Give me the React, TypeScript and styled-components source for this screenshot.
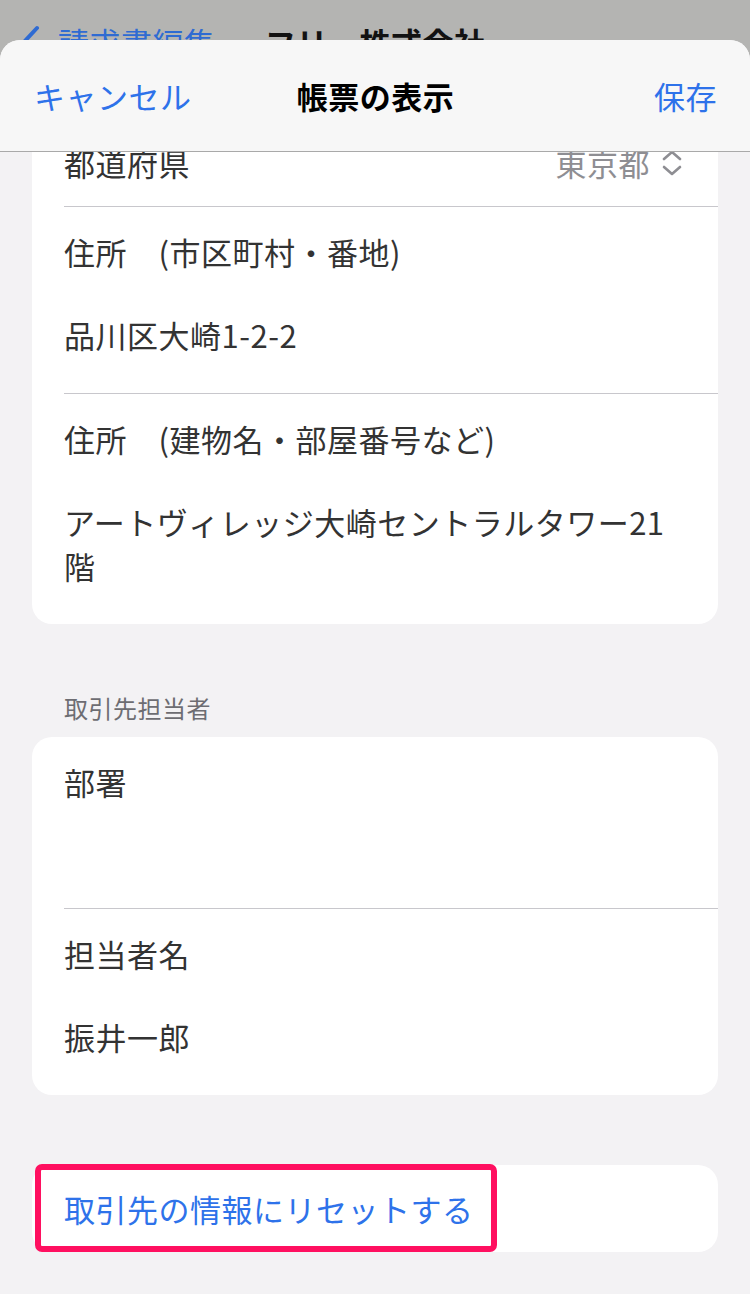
import React from "react";
import styled, { createGlobalStyle } from "styled-components";

const GlobalStyle = createGlobalStyle`
  html, body {
    margin: 0;
    padding: 0;
    background: #b4b4b2;
  }
  body {
    font-family: "Noto Sans CJK JP", "Noto Sans", sans-serif;
    letter-spacing: 0.5px;
    -webkit-font-smoothing: antialiased;
  }
`;

const Screen = styled.div`
  width: 750px;
  height: 1294px;
  display: flex;
  flex-direction: column;
  overflow: hidden;
  background: #b4b4b2;
`;

const BehindBar = styled.div`
  height: 40px;
  overflow: hidden;
  display: flex;
  align-items: flex-start;
  padding: 20px 0 0 20px;
  box-sizing: border-box;
`;

const BehindBack = styled.div`
  display: flex;
  align-items: center;
  gap: 18px;
  width: 245px;
  color: #2f6bd2;
  font-size: 31px;
  line-height: 44px;
`;

const BehindTitle = styled.div`
  color: #121212;
  font-size: 31px;
  font-weight: 700;
  line-height: 44px;
`;

const Sheet = styled.div`
  flex: 1;
  display: flex;
  flex-direction: column;
  background: #f3f2f4;
  border-radius: 20px 20px 0 0;
  overflow: hidden;
`;

const SheetHeader = styled.div`
  height: 112px;
  flex-shrink: 0;
  display: grid;
  grid-template-columns: 1fr auto 1fr;
  align-items: center;
  padding: 0 33px 0 34px;
  background: #f7f7f7;
  border-bottom: 1px solid #a9a9a9;
  box-sizing: border-box;
  position: relative;
  z-index: 1;
`;

const NavButton = styled.span<{ $align: "left" | "right" }>`
  color: #2e72ea;
  font-size: 31px;
  line-height: 44px;
  justify-self: ${(p) => (p.$align === "left" ? "start" : "end")};
`;

const NavTitle = styled.span`
  color: #000;
  font-size: 31px;
  font-weight: 700;
  line-height: 44px;
`;

const Content = styled.div`
  flex: 1;
  overflow: hidden;
  padding: 0 32px;
`;

const ScrollBody = styled.div<{ $offset: number }>`
  margin-top: ${(p) => -p.$offset}px;
`;

const Card = styled.div`
  position: relative;
  background: #fff;
  border-radius: 20px;
  padding-left: 32px;
`;

const Row = styled.div`
  border-bottom: 1px solid #c8c7cc;
  &:last-child {
    border-bottom: none;
  }
`;

const InlineRow = styled(Row)`
  height: 87px;
  display: flex;
  align-items: center;
  justify-content: space-between;
  padding-right: 34px;
`;

const StackRow = styled(Row)`
  padding: 23px 40px 36px 0;
`;

const Label = styled.div<{ $tone?: "link" }>`
  color: ${(p) => (p.$tone === "link" ? "#2e72ea" : "#333")};
  font-size: 31px;
  line-height: 44px;
  white-space: pre;
`;

const Value = styled.div<{ $empty?: boolean }>`
  margin-top: 39px;
  min-height: ${(p) => (p.$empty ? 29 : 44)}px;
  color: #333;
  font-size: 31px;
  line-height: 44px;
`;

const Picker = styled.div`
  display: flex;
  align-items: center;
  gap: 10px;
  color: #8e8e93;
  font-size: 31px;
  line-height: 44px;
`;

const SectionTitle = styled.div`
  margin: 68px 0 13px;
  padding-left: 32px;
  color: #6d6d72;
  font-size: 24px;
  line-height: 32px;
`;

const SectionGap = styled.div`
  height: 70px;
`;

const Highlight = styled.div`
  position: absolute;
  left: 3px;
  top: -1px;
  bottom: 0;
  width: 462px;
  border: 6px solid #ff1060;
  border-radius: 7px;
  box-sizing: border-box;
  pointer-events: none;
`;

const UpDownIcon = () => (
  <svg width="24" height="28" viewBox="0 0 24 28" fill="none">
    <polyline
      points="4,10 12,3 20,10"
      stroke="#8e8e93"
      strokeWidth="2.6"
      strokeLinecap="round"
      strokeLinejoin="round"
    />
    <polyline
      points="4,18 12,25 20,18"
      stroke="#8e8e93"
      strokeWidth="2.6"
      strokeLinecap="round"
      strokeLinejoin="round"
    />
  </svg>
);

const BackChevron = () => (
  <svg width="20" height="34" viewBox="0 0 20 34" fill="none">
    <polyline
      points="17,3 4,17 17,31"
      stroke="#2f6bd2"
      strokeWidth="4"
      strokeLinecap="round"
      strokeLinejoin="round"
    />
  </svg>
);

interface Field {
  label: string;
  value: string;
}

const addressFields: Field[] = [
  { label: "住所　(市区町村・番地)", value: "品川区大崎1-2-2" },
  {
    label: "住所　(建物名・部屋番号など)",
    value: "アートヴィレッジ大崎セントラルタワー21階",
  },
];

const contactFields: Field[] = [
  { label: "部署", value: "" },
  { label: "担当者名", value: "振井一郎" },
];

const StackField: React.FC<Field> = ({ label, value }) => (
  <StackRow>
    <Label>{label}</Label>
    <Value $empty={!value}>{value}</Value>
  </StackRow>
);

export default function App() {
  return (
    <>
      <GlobalStyle />
      <Screen>
        <BehindBar>
          <BehindBack>
            <BackChevron />
            <span>請求書編集</span>
          </BehindBack>
          <BehindTitle>フリー株式会社</BehindTitle>
        </BehindBar>
        <Sheet>
          <SheetHeader>
            <NavButton $align="left">キャンセル</NavButton>
            <NavTitle>帳票の表示</NavTitle>
            <NavButton $align="right">保存</NavButton>
          </SheetHeader>
          <Content>
            <ScrollBody $offset={33}>
              <Card>
                <InlineRow>
                  <Label>都道府県</Label>
                  <Picker>
                    <span>東京都</span>
                    <UpDownIcon />
                  </Picker>
                </InlineRow>
                {addressFields.map((f) => (
                  <StackField key={f.label} {...f} />
                ))}
              </Card>

              <SectionTitle>取引先担当者</SectionTitle>
              <Card>
                {contactFields.map((f) => (
                  <StackField key={f.label} {...f} />
                ))}
              </Card>

              <SectionGap />
              <Card>
                <Highlight />
                <InlineRow>
                  <Label $tone="link">取引先の情報にリセットする</Label>
                </InlineRow>
              </Card>
            </ScrollBody>
          </Content>
        </Sheet>
      </Screen>
    </>
  );
}
